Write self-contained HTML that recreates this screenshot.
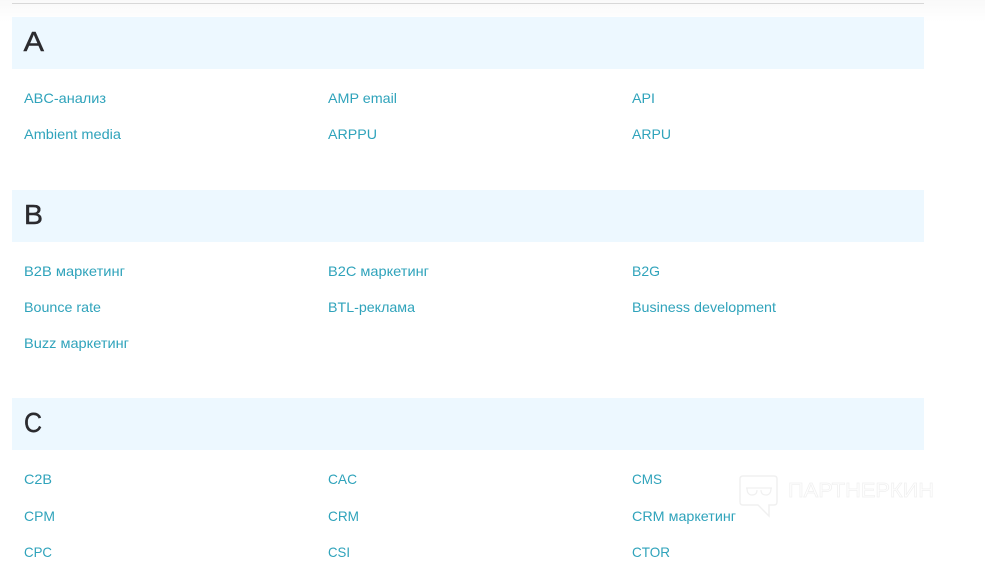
<!DOCTYPE html>
<html lang="ru">
<head>
<meta charset="utf-8">
<title>Глоссарий</title>
<style>
html,body{margin:0;padding:0;background:#fff;width:985px;height:568px;overflow:hidden}
svg{display:block}
.l{font-family:"Liberation Sans","DejaVu Sans",sans-serif;font-size:14px;fill:#2fa3bb}
.h{font-family:"Liberation Sans","DejaVu Sans",sans-serif;font-size:28px;fill:#2b2b2f;stroke:#2b2b2f;stroke-width:.4}
.w{font-family:"Liberation Sans","DejaVu Sans",sans-serif;font-size:20px;fill:#fff;stroke:#f0f0f0;stroke-width:.7}
</style>
</head>
<body>
<svg width="985" height="568" viewBox="0 0 985 568" xmlns="http://www.w3.org/2000/svg">
<defs>
<linearGradient id="t" x1="0" y1="0" x2="0" y2="1"><stop offset="0" stop-color="#f9f9f9"/><stop offset="1" stop-color="#ffffff"/></linearGradient>
</defs>
<rect width="985" height="22" fill="url(#t)"/>
<rect x="12" y="3" width="912" height="1" fill="#d8d8d8"/>
<rect x="12" y="17" width="912" height="52" fill="#edf8ff"/>
<rect x="12" y="190" width="912" height="52" fill="#edf8ff"/>
<rect x="12" y="398" width="912" height="52" fill="#edf8ff"/>

<text class="h" x="23.5" y="51" textLength="20.5" lengthAdjust="spacingAndGlyphs">A</text>
<text class="h" x="24" y="224" textLength="19" lengthAdjust="spacingAndGlyphs">B</text>
<text class="h" x="24" y="432" textLength="18" lengthAdjust="spacingAndGlyphs">C</text>

<text class="l" x="24" y="103" textLength="82" lengthAdjust="spacingAndGlyphs">ABC-анализ</text>
<text class="l" x="328" y="103" textLength="69" lengthAdjust="spacingAndGlyphs">AMP email</text>
<text class="l" x="632" y="103" textLength="23" lengthAdjust="spacingAndGlyphs">API</text>
<text class="l" x="24" y="139" textLength="97" lengthAdjust="spacingAndGlyphs">Ambient media</text>
<text class="l" x="328" y="139" textLength="49" lengthAdjust="spacingAndGlyphs">ARPPU</text>
<text class="l" x="632" y="139" textLength="39" lengthAdjust="spacingAndGlyphs">ARPU</text>

<text class="l" x="24" y="276" textLength="101" lengthAdjust="spacingAndGlyphs">B2B маркетинг</text>
<text class="l" x="328" y="276" textLength="101" lengthAdjust="spacingAndGlyphs">B2C маркетинг</text>
<text class="l" x="632" y="276" textLength="28" lengthAdjust="spacingAndGlyphs">B2G</text>
<text class="l" x="24" y="312" textLength="77" lengthAdjust="spacingAndGlyphs">Bounce rate</text>
<text class="l" x="328" y="312" textLength="87" lengthAdjust="spacingAndGlyphs">BTL-реклама</text>
<text class="l" x="632" y="312" textLength="144" lengthAdjust="spacingAndGlyphs">Business development</text>
<text class="l" x="24" y="348" textLength="105" lengthAdjust="spacingAndGlyphs">Buzz маркетинг</text>

<text class="l" x="24" y="484" textLength="28" lengthAdjust="spacingAndGlyphs">C2B</text>
<text class="l" x="328" y="484" textLength="29" lengthAdjust="spacingAndGlyphs">CAC</text>
<text class="l" x="632" y="484" textLength="30" lengthAdjust="spacingAndGlyphs">CMS</text>
<text class="l" x="24" y="521" textLength="31" lengthAdjust="spacingAndGlyphs">CPM</text>
<text class="l" x="328" y="521" textLength="31" lengthAdjust="spacingAndGlyphs">CRM</text>
<text class="l" x="632" y="521" textLength="104" lengthAdjust="spacingAndGlyphs">CRM маркетинг</text>
<text class="l" x="24" y="557" textLength="28" lengthAdjust="spacingAndGlyphs">CPC</text>
<text class="l" x="328" y="557" textLength="22" lengthAdjust="spacingAndGlyphs">CSI</text>
<text class="l" x="632" y="557" textLength="38" lengthAdjust="spacingAndGlyphs">CTOR</text>

<g fill="none" stroke="#f0f0f0" stroke-width="1.4">
<path d="M743 476H774Q777 476 777 479V502Q777 505 774 505H769V516L758 505H743Q740 505 740 502V479Q740 476 743 476Z"/>
<path d="M746 488H772M747 488Q747 495 752 495Q757 495 757 490M761 490Q761 495 766 495Q771 495 771 488" stroke-width="1.2"/>
</g>
<text class="w" x="788" y="497" textLength="146" lengthAdjust="spacingAndGlyphs">ПАРТНЕРКИН</text>
</svg>
</body>
</html>
